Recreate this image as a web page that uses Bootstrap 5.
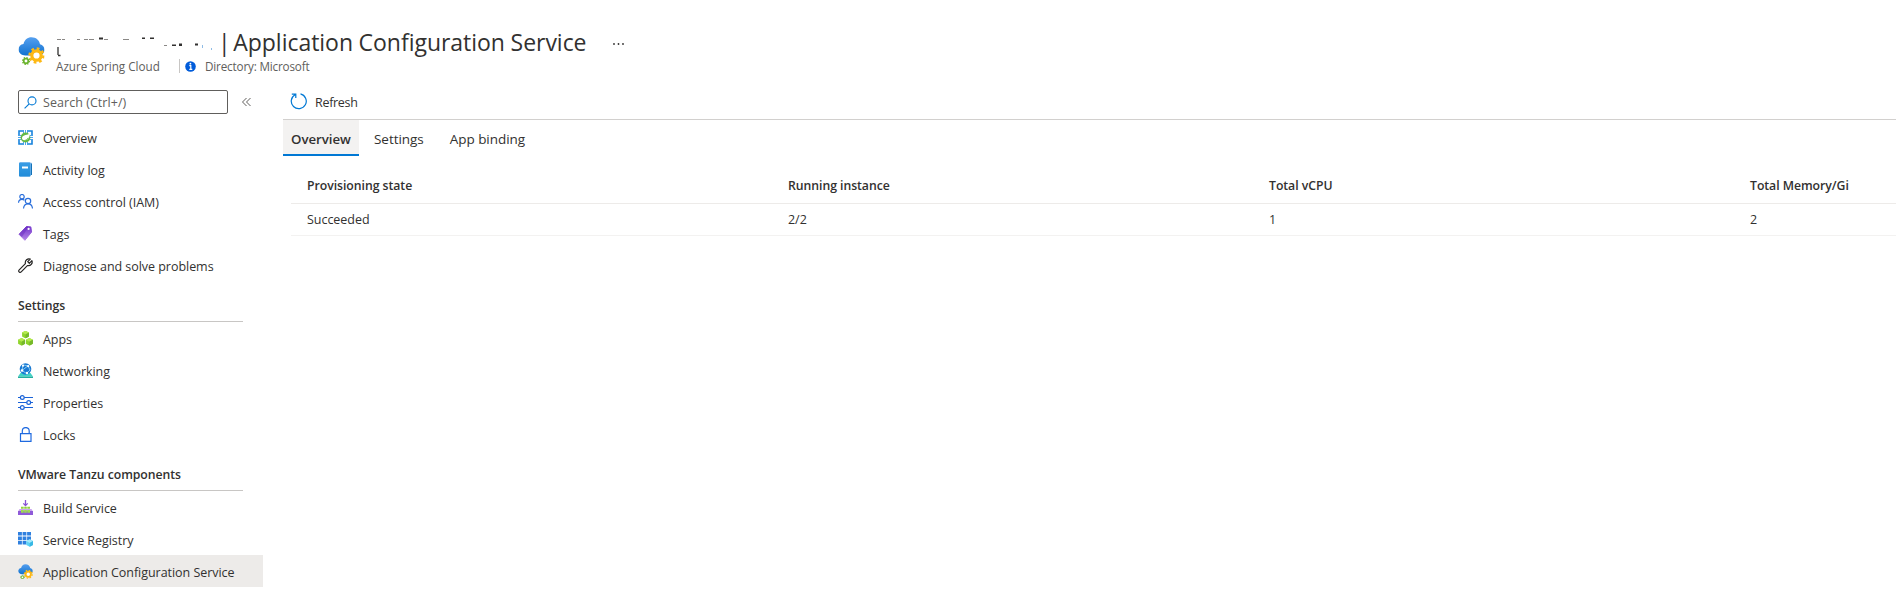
<!DOCTYPE html>
<html lang="en">
<head>
<meta charset="utf-8">
<meta name="viewport" content="width=device-width, initial-scale=1">
<title>Application Configuration Service</title>
<link href="https://cdn.jsdelivr.net/npm/bootstrap@5.3.0/dist/css/bootstrap.min.css" rel="stylesheet">
<script src="https://cdn.jsdelivr.net/npm/bootstrap@5.3.0/dist/js/bootstrap.bundle.min.js" defer></script>
<style>
body{font-family:"Open Sans","Noto Sans",sans-serif;font-size:12.5px;line-height:20px;letter-spacing:-.04px;color:#323130;background:#fff;height:602px;overflow:hidden;white-space:nowrap}
svg{flex:none;display:block}
.page-head{height:90px;padding:28px 0 0 18px}
.page-logo{margin:9px 11px 0 0}
.page-title{font-size:23px;line-height:28px;height:30px;font-weight:400;margin:0;color:#323130;letter-spacing:-.03px;word-spacing:-.3px}
.title-name{width:162px}
.page-title .bar{margin-right:-3px}
.title-more{margin:1px 0 0 25px}
.sub{font-size:11.7px;line-height:16px;height:16px;color:#605e5c}
.sub .res{width:123px;letter-spacing:0}
.sub .sep{width:1px;height:14px;background:#c8c6c4;margin-right:5px}
.sub .dir{margin-left:9px;letter-spacing:-.17px}
.side{width:263px;flex:none}
.side-tools{height:31px;padding-left:18px}
.search{width:210px;height:24px;border:1px solid #605e5c;border-radius:2px;color:#605e5c;padding-left:5px;line-height:22px}
.search svg{margin-right:6px}
.search span{padding-top:1px;letter-spacing:.05px}
.collapse-mark{margin:7px 0 0 14px}
.side .nav-link{height:32px;padding:3px 0 0 18px;color:#323130;gap:10px}
.side .nav-link svg{width:15px;height:15px;margin-bottom:2px}
.side .nav-link.active{background:#edebe9}
.side-title{height:41px;margin:0 20px 0 18px;border-bottom:1px solid #c8c6c4;font-size:12.25px;font-weight:600;line-height:20px;padding-top:15px}
.main{margin-left:20px;min-width:0;overflow:hidden}
.cmd{height:30px;border-bottom:1px solid #d2d0ce;padding:0 0 6px 7px;gap:8px}
.cmd span{letter-spacing:-.3px;padding-top:2px}
.cmd svg{margin-bottom:1px}
.tabs{gap:7px}
.tabs .nav-link{height:36px;font-size:13.5px;color:#323130;padding:2px 8px 0;border-bottom:2px solid transparent;line-height:34px}
.tabs .nav-link.active{width:76px;background:#f3f2f1;border-color:#0078d4;font-weight:600;font-size:13.25px}
.tabs .nav-link:last-child{margin-left:3px}
.metrics{margin:13px 0 0 8px;width:1924px}
.metrics .cell{width:481px;padding-left:16px}
.metrics .hd{height:35px;border-bottom:1px solid #edebe9;font-size:12.25px;font-weight:600}
.metrics .rw{height:32px;border-bottom:1px solid #f3f2f1}
</style>
</head>
<body>
<svg width="0" height="0" class="position-absolute">
<defs>
<linearGradient id="cl" x1="0" y1="0" x2="0" y2="1"><stop offset="0" stop-color="#559fef"/><stop offset="1" stop-color="#1273d0"/></linearGradient>
<linearGradient id="pu" x1="0" y1="0" x2="0" y2="1"><stop offset="0" stop-color="#7637cc"/><stop offset="1" stop-color="#b184e6"/></linearGradient>
<symbol id="acs" viewBox="0 0 26 28">
<path d="M7 18.500C3 18.500 0 16 0 12.600 0 9.500 2 7.300 5 7 6 3 9 .3 13 .3c4.500 0 7.800 2.800 8.500 6.900 2.700.5 4.500 2.800 4.500 5.500 0 3.400-2.600 5.800-6 5.800z" fill="url(#cl)"/>
<circle cx="18" cy="18.500" r="4.700" fill="#fff" stroke="#fdb813" stroke-width="3.200"/>
<circle cx="18" cy="18.500" r="7" fill="none" stroke="#fdb813" stroke-width="2.400" stroke-dasharray="2.750 2.750"/>
<circle cx="7.500" cy="24" r="2.300" fill="#fff" stroke="#6bb32d" stroke-width="1.700"/>
<circle cx="7.500" cy="24" r="3.400" fill="none" stroke="#6bb32d" stroke-width="1.400" stroke-dasharray="1.335 1.335"/>
</symbol>
<symbol id="cube" viewBox="0 0 8 8"><path d="M4 0l3.600 1.900v4L4 8 .4 5.900v-4z" fill="#8fd42c"/><path d="M.4 1.900L4 0l3.600 1.900L4 3.900z" fill="#b4ea4e"/><path d="M4 3.900l3.600-2v4L4 8z" fill="#76b82a"/></symbol>
</defs>
</svg>

<header class="page-head d-flex">
<svg class="page-logo" width="27" height="28" viewBox="0 0 26 28"><use href="#acs" width="26" height="28"/></svg>
<div>
<div class="d-flex align-items-center">
<svg class="title-name" height="30" viewBox="0 0 162 30">
<g fill="#8a8886"><path d="M1 11h4v1H1zM6 11h3v1H6zM21 11h3v1h-3zM28 11h4v1h-4zM33 11h5v1h-5zM48 11h4v1h-4zM67 11h6v1h-6zM108 17h3v1h-3z"/></g>
<g fill="#323130"><path d="M43 9.500h4v2h-4zM86 9.500h3v1.500h-3zM94 9.500h4v1.500h-4zM116 16.500h4v1.500h-4zM123 15.500h3v2.500h-3zM139 15.500h3v2h-3z"/></g>
<path d="M2 19v8M2 27.500h2.500" stroke="#323130" stroke-width="1.300"/>
<path d="M146.500 17v3M155.500 20v2" stroke="#8fbce6"/>
</svg>
<h1 class="page-title"><span class="bar">|</span> Application Configuration Service</h1>
<svg class="title-more" width="16" height="4" fill="#323130"><circle cx="2" cy="2" r=".9"/><circle cx="6.500" cy="2" r=".9"/><circle cx="11" cy="2" r=".9"/></svg>
</div>
<div class="sub d-flex align-items-center"><span class="res">Azure Spring Cloud</span><span class="sep"></span>
<svg width="11" height="11" viewBox="0 0 11 11"><circle cx="5.500" cy="5.500" r="5.300" fill="#015cda"/><path d="M4.300 4.700h1.500v3.600M4.300 8.300h3" stroke="#fff" stroke-width="1.200" fill="none"/><circle cx="5.400" cy="2.700" r=".9" fill="#fff"/></svg>
<span class="dir">Directory: Microsoft</span></div>
</div>
</header>

<div class="d-flex">
<aside class="side">
<div class="side-tools d-flex align-items-start">
<div class="search d-flex align-items-center"><svg width="13" height="13" viewBox="0 0 13 13" fill="none" stroke="#0078d4" stroke-width="1.100"><circle cx="8" cy="4.900" r="4"/><path d="M5.200 7.900L.6 12.400"/></svg><span>Search (Ctrl+/)</span></div>
<svg class="collapse-mark" width="9" height="10" viewBox="0 0 9 10" fill="none" stroke="#605e5c"><path d="M4.500 1l-4 4 4 4M8.500 1l-4 4 4 4"/></svg>
</div>
<nav class="nav flex-column flex-nowrap">
<a class="nav-link d-flex align-items-center"><svg viewBox="0 0 15 15"><path d="M1 5.500V1h4.500M9.500 1H14v4.500M14 9.500V14H9.500M5.500 14H1V9.500" fill="none" stroke="#1683dd" stroke-width="1.600"/><path d="M7.500 0v15M0 7.500h15M5.500 0v3M9.500 0v3M5.500 12v3M9.500 12v3M0 5.500h3M12 5.500h3M0 9.500h3M12 9.500h3" stroke="#3b9be8" stroke-width=".9"/><circle cx="7.500" cy="7.500" r="4.900" fill="#63b944"/><path d="M11.800 3.500C10 5.300 4.600 4.500 4 7.800c-.2 1.500.8 2.500 2.100 2.600 3.700.2 5.700-2.700 5.700-6.900z" fill="#fff"/><path d="M4.300 10.800c3 .2 5.100-1.300 5.900-3" stroke="#63b944" fill="none" stroke-width=".8"/></svg>Overview</a>
<a class="nav-link d-flex align-items-center"><svg viewBox="0 0 15 15"><path d="M2 .5h11a1 1 0 0 1 1 1v11.500H3z" fill="#b9d9f1"/><path d="M13.500 1.500V13" stroke="#1573b8"/><rect x="1" y=".5" width="11.500" height="14" rx="1" fill="url(#cl)"/><rect x="1" y=".5" width="11.500" height="14" rx="1" fill="#2b9bdf" opacity=".65"/><rect x="4" y="4.500" width="6" height="2" fill="#fff"/></svg>Activity log</a>
<a class="nav-link d-flex align-items-center"><svg viewBox="0 0 15 15" fill="none" stroke="#2a6fdb" stroke-width="1.200"><circle cx="4" cy="2.700" r="2.200"/><path d="M.5 8.800C.7 6.500 2 5.400 4 5.400c1 0 1.800.3 2.400.8"/><circle cx="10" cy="7" r="2.700"/><path d="M5.500 14.500c.3-3 2-4.600 4.500-4.600s4.200 1.600 4.500 4.600"/></svg>Access control (IAM)</a>
<a class="nav-link d-flex align-items-center"><svg viewBox="0 0 15 15"><path d="M8.500.5l4.300.4.800 5.100-6.700 8.300L1 8.200z" fill="url(#pu)" stroke="url(#pu)" stroke-linejoin="round"/><path d="M1 8.200L8.500.5l1.800 1-6.500 9.600z" fill="#6329bd" opacity=".45"/><circle cx="10.600" cy="2.900" r="1.100" fill="#fff"/></svg>Tags</a>
<a class="nav-link d-flex align-items-center"><svg viewBox="0 0 15 15" fill="none" stroke="#252423" stroke-width="1.200" stroke-linejoin="round"><path d="M12.300 1.100L9.700 3.700l1.600 1.600 2.600-2.600c1 2.700-1.200 5.600-4.500 4.900l-6.200 6.200c-1.500 1.500-3.500-.5-2-2l6.200-6.200C6.700 2.300 9.600.1 12.300 1.100z"/></svg>Diagnose and solve problems</a>
<div class="side-title">Settings</div>
<a class="nav-link d-flex align-items-center"><svg viewBox="0 0 15 15"><use href="#cube" x="3.700" y="-.2" width="7.600" height="7.600"/><use href="#cube" x="-.3" y="7" width="7.800" height="7.800"/><use href="#cube" x="7.500" y="7" width="7.800" height="7.800"/></svg>Apps</a>
<a class="nav-link d-flex align-items-center"><svg viewBox="0 0 15 15"><path d="M2.500 10h10l2.500 3.500H0z" fill="#42d3c6"/><path d="M0 13.500h15V15H0z" fill="#22ad9f"/><circle cx="7.500" cy="6" r="5.800" fill="#1a79d2"/><path d="M5 2l5 .8L12 7l-3.500 3.500L4 7.500zM4 7.500L10 2.800" stroke="#8cd0f5" fill="none" stroke-width=".9"/><g fill="#fff"><circle cx="5" cy="2.700" r="1.100"/><circle cx="10.200" cy="3.200" r="1.100"/><circle cx="4" cy="7.500" r="1.300"/><circle cx="9" cy="10" r="1.200"/></g></svg>Networking</a>
<a class="nav-link d-flex align-items-center"><svg viewBox="0 0 15 15" fill="#fff" stroke="#1a63d8" stroke-width="1.200"><path d="M0 2.500h15M0 7.500h15M0 12.500h15"/><circle cx="4.300" cy="2.500" r="1.900"/><circle cx="10.700" cy="7.500" r="1.900"/><circle cx="4.300" cy="12.500" r="1.900"/></svg>Properties</a>
<a class="nav-link d-flex align-items-center"><svg viewBox="0 0 15 15" fill="none" stroke="#1f6ae0" stroke-width="1.200"><path d="M2.500 6.600h10.500v7.800H2.500zM4.300 6.500V4c0-4.600 6.900-4.600 6.900 0v2.500"/></svg>Locks</a>
<div class="side-title">VMware Tanzu components</div>
<a class="nav-link d-flex align-items-center"><svg viewBox="0 0 15 15"><path d="M7.500 0v5M5.300 3.400l2.200 2.200 2.200-2.200" fill="none" stroke="#8650d5" stroke-width="1.300"/><path d="M3 6.800h2.700v2H3zM6.200 6.800h2.600v2H6.200zM9.300 6.800H12v2H9.300z" fill="#92d13f"/><path d="M1.500 9h12l1.500 2.500H0z" fill="#c9a5ef"/><path d="M0 11h15v4H0z" fill="#8f5ad8"/><path d="M3 10h2.700v2.700H3zM6.200 10h2.600v2.700H6.200zM9.300 10H12v2.700H9.300z" fill="#9edb50"/></svg>Build Service</a>
<a class="nav-link d-flex align-items-center"><svg viewBox="0 0 15 15"><path d="M0 0h3.900v3.600H0zM4.600 0h3.800v3.600H4.600zM9.100 0H13v3.600H9.100zM0 4.400h3.900V8H0zM4.600 4.400h3.800V8H4.600zM9.100 4.400H13V8H9.100zM0 8.800h3.900v3.800H0zM4.600 8.800h3.800v3.800H4.600z" fill="#2f80df"/><path d="M11.700 7.300l3.300 1.800v3.800l-3.300 1.900-3.400-1.900V9.100z" fill="#5fd3f5"/><path d="M8.300 9.100l3.400-1.800L15 9.100 11.700 11z" fill="#a3e9fb"/><path d="M11.700 11L15 9.100v3.800l-3.300 1.900z" fill="#38b8e4"/></svg>Service Registry</a>
<a class="nav-link active d-flex align-items-center"><svg viewBox="0 0 15 15"><use href="#acs" width="15" height="15.500"/></svg>Application Configuration Service</a>
</nav>
</aside>

<main class="main flex-grow-1">
<div class="cmd d-flex align-items-center"><svg width="17" height="17" viewBox="0 0 17 17" fill="none" stroke="#0078d4" stroke-width="1.200"><path d="M10.500.9A7.500 7.500 0 1 1 5 1.700M1.800 1.100h4v4"/></svg><span>Refresh</span></div>
<nav class="tabs nav flex-nowrap"><a class="nav-link active">Overview</a><a class="nav-link">Settings</a><a class="nav-link">App binding</a></nav>
<div class="metrics">
<div class="hd d-flex align-items-center"><div class="cell">Provisioning state</div><div class="cell">Running instance</div><div class="cell">Total vCPU</div><div class="cell">Total Memory/Gi</div></div>
<div class="rw d-flex align-items-center"><div class="cell">Succeeded</div><div class="cell">2/2</div><div class="cell">1</div><div class="cell">2</div></div>
</div>
</main>
</div>
</body>
</html>
